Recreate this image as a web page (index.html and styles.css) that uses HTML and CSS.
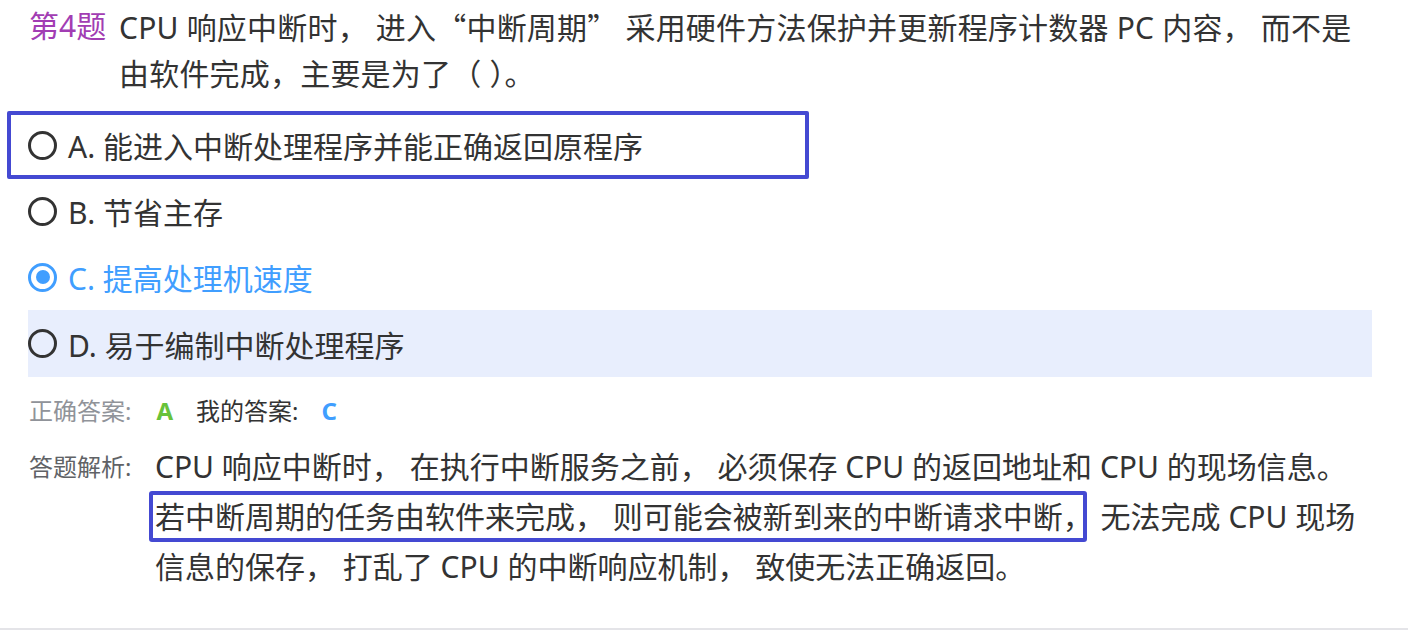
FILE: index.html
```html
<!DOCTYPE html>
<html lang="zh-CN">
<head>
<meta charset="utf-8">
<title>第4题</title>
<link rel="stylesheet" href="styles.css">
</head>
<body>
<div class="card">
  <div class="q-title">
    <span class="q-no">第4题</span>
    <div class="q-text">CPU 响应中断时， 进入<span class="cjk">“</span>中断周期<span class="cjk">”</span> 采用硬件方法保护并更新程序计数器 PC 内容， 而不是由软件完成，主要是为了（ ）。</div>
  </div>

  <div class="options">
    <div class="option marked">
      <span class="radio"></span>
      <span class="opt-text">A. 能进入中断处理程序并能正确返回原程序</span>
      <span class="mark-box"></span>
    </div>
    <div class="option">
      <span class="radio"></span>
      <span class="opt-text">B. 节省主存</span>
    </div>
    <div class="option selected">
      <span class="radio checked"></span>
      <span class="opt-text">C. 提高处理机速度</span>
    </div>
    <div class="option hover">
      <span class="radio"></span>
      <span class="opt-text">D. 易于编制中断处理程序</span>
    </div>
  </div>

  <div class="answer-row">
    <span class="ans-label">正确答案:</span>
    <span class="ans-right">A</span>
    <span class="ans-mine-label">我的答案:</span>
    <span class="ans-mine">C</span>
  </div>

  <div class="analysis">
    <span class="ana-label">答题解析:</span>
    <div class="ana-text">CPU 响应中断时， 在执行中断服务之前， 必须保存 CPU 的返回地址和 CPU 的现场信息。<span class="hl-box">若中断周期的任务由软件来完成， 则可能会被新到来的中断请求中断<span class="tight">，</span></span> 无法完成 CPU 现场信息的保存， 打乱了 CPU 的中断响应机制， 致使无法正确返回。</div>
  </div>
</div>
</body>
</html>
```

FILE: styles.css
```css
* { box-sizing: border-box; }

html, body {
  margin: 0;
  padding: 0;
  background: #fff;
}

body {
  font-family: "Noto Sans", "Noto Sans CJK SC", sans-serif;
  color: #333;
  width: 1408px;
  height: 630px;
  overflow: hidden;
}

.cjk { font-family: "Noto Sans CJK SC", sans-serif; }

.card {
  height: 630px;
  padding: 3px 41px 0 28px;
  border-bottom: 2px solid #e4e4e8;
}

.q-title {
  display: flex;
  font-size: 30px;
  line-height: 46px;
}

.q-no {
  flex: 0 0 91px;
  padding-left: 1px;
  color: #a23db3;
}

.q-text {
  flex: 1;
  min-width: 0;
  letter-spacing: 0.2px;
}

.options {
  margin-top: 15px;
  margin-right: -5px;
}

.option {
  position: relative;
  display: flex;
  align-items: center;
  gap: 11px;
  height: 66px;
  font-size: 30px;
}

.option.hover { background: #e8eefd; height: 67px; }

.option.selected { color: #409eff; }

.radio {
  flex: 0 0 29px;
  width: 29px;
  height: 29px;
  border: 3px solid #333;
  border-radius: 50%;
  display: flex;
  align-items: center;
  justify-content: center;
}

.radio.checked { border-color: #409eff; }

.radio.checked::after {
  content: "";
  width: 14px;
  height: 14px;
  border-radius: 50%;
  background: #409eff;
}

.mark-box {
  position: absolute;
  left: -21px;
  top: -1px;
  width: 802px;
  height: 68px;
  border: 4px solid #4449d2;
  border-radius: 2px;
  pointer-events: none;
}

.answer-row {
  display: flex;
  align-items: center;
  margin-top: 19px;
  font-size: 24px;
  line-height: 30px;
  padding-left: 1px;
}

.ans-label { color: #909399; }
.ans-right { color: #67c23a; font-weight: 700; margin-left: 25px; }
.ans-mine-label { color: #333; margin-left: 23px; }
.ans-mine { color: #409eff; font-weight: 700; margin-left: 23px; }

.analysis {
  display: flex;
  margin-top: 16px;
}

.ana-label {
  flex: 0 0 127px;
  padding-left: 1px;
  font-size: 24px;
  line-height: 50px;
  color: #606266;
}

.ana-text {
  flex: 1;
  min-width: 0;
  font-size: 30px;
  line-height: 50px;
}

.hl-box {
  border: 4px solid #4449d2;
  border-radius: 3px;
  padding: 1px 2px;
  margin-left: -6px;
  margin-right: 6px;
}

.tight { letter-spacing: -12px; }
```
